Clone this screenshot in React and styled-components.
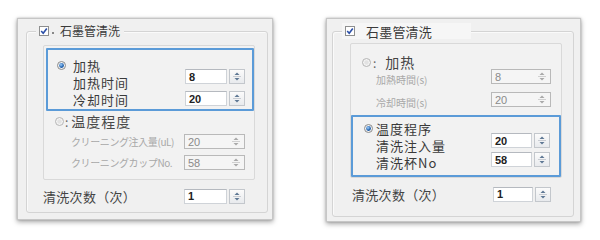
import styled, { createGlobalStyle, css } from "styled-components";

const GlobalStyle = createGlobalStyle`
  html, body {
    margin: 0;
    padding: 0;
    background: #ffffff;
  }
  body {
    width: 600px;
    height: 240px;
    overflow: hidden;
    font-family: "Noto Sans CJK SC", "Noto Sans", sans-serif;
    color: #333;
  }
`;

const Page = styled.div`
  display: flex;
  align-items: flex-start;
  padding: 18px 0 0 17px;
  gap: 53px;
`;

const Window = styled.div`
  box-sizing: border-box;
  width: ${(p) => p.$w}px;
  height: ${(p) => p.$h}px;
  padding: ${(p) => p.$pad};
  background: #f0f0f0;
  border: 1px solid #c6c6c6;
  box-shadow: 0 2px 5px rgba(0, 0, 0, 0.35), 0 0 2px rgba(0, 0, 0, 0.2);
`;

const Group = styled.fieldset`
  box-sizing: border-box;
  height: 100%;
  margin: 0;
  padding: 0;
  min-width: 0;
  display: flex;
  flex-direction: column;
  border: 1px solid #d4d4d4;
  border-radius: 3px;
  box-shadow: inset 1px 1px 0 #fafafa;
`;

const Legend = styled.legend`
  display: flex;
  align-items: center;
  box-sizing: border-box;
  height: ${(p) => p.$h}px;
  width: ${(p) => (p.$w ? `${p.$w}px` : "auto")};
  margin-left: 9px;
  padding: 0 4px 0 3px;
  gap: ${(p) => p.$gap}px;
  background: ${(p) => p.$bg || "#f0f0f0"};
`;

const Title = styled.span`
  font-size: ${(p) => p.$size}px;
  line-height: 1;
  color: #3a3a3a;
  letter-spacing: ${(p) => p.$ls || 0}px;
`;

const FocusDot = styled.span`
  width: 2px;
  height: 2px;
  background: #888;
  margin: 4px 2px 0 -1px;
`;

const Inner = styled.div`
  display: flex;
  flex-direction: column;
  margin: ${(p) => p.$m};
  background: #f2f2f2;
  border: 1px solid #d9d9d9;
  border-radius: 2px;
`;

const Highlight = styled.div`
  display: flex;
  margin: ${(p) => p.$m || 0};
  padding: ${(p) => p.$pad};
  border: 2px solid #5b9bd8;
  border-radius: 1px;
`;

const Plain = styled.div`
  display: flex;
  flex-direction: column;
  padding: ${(p) => p.$pad};
  gap: ${(p) => p.$gap || 0}px;
`;

const LabelCol = styled.div`
  display: flex;
  flex-direction: column;
  flex: 1;
`;

const InputCol = styled.div`
  display: flex;
  flex-direction: column;
  margin-top: ${(p) => p.$top}px;
  gap: ${(p) => p.$gap}px;
`;

const Head = styled.div`
  display: flex;
  align-items: center;
  height: ${(p) => p.$h}px;
  gap: ${(p) => p.$gap}px;
  font-size: ${(p) => p.$size}px;
  letter-spacing: 1px;
  color: ${(p) => p.$color || "#3a3a3a"};
  white-space: nowrap;
`;

const Colon = styled.span`
  font-size: 12px;
  color: #666;
  margin-right: ${(p) => p.$mr}px;
`;

const Label = styled.div`
  height: ${(p) => p.$h}px;
  line-height: ${(p) => p.$h}px;
  padding-left: ${(p) => p.$indent}px;
  font-size: ${(p) => p.$size}px;
  letter-spacing: 1px;
  color: #3a3a3a;
  white-space: nowrap;
`;

const Row = styled.div`
  display: flex;
  align-items: ${(p) => p.$align || "center"};
  justify-content: space-between;
  height: ${(p) => p.$h}px;
  margin-top: ${(p) => p.$mt || 0}px;
`;

const GrayLabel = styled.div`
  padding-left: ${(p) => p.$indent}px;
  padding-top: ${(p) => p.$drop || 0}px;
  font-family: "Noto Sans CJK JP", "Noto Sans", sans-serif;
  font-size: ${(p) => p.$size || 10}px;
  letter-spacing: ${(p) => p.$ls || 0}px;
  line-height: 14px;
  color: #a8a8a8;
  white-space: nowrap;
`;

const CountRow = styled.div`
  display: flex;
  align-items: center;
  justify-content: space-between;
  height: 16px;
  margin: ${(p) => p.$m};
`;

const CountLabel = styled.span`
  font-size: 13px;
  color: #444;
  letter-spacing: 0.3px;
`;

const SpinWrap = styled.div`
  display: flex;
  box-sizing: border-box;
  width: ${(p) => p.$w}px;
  height: 15px;
  gap: 2px;
  ${(p) =>
    p.$off &&
    css`
      gap: 0;
      border: 1px solid #b9b9b9;
      background: #f5f5f5;
      padding: 0 1px 0 0;
    `}
`;

const Field = styled.div`
  flex: 1;
  display: flex;
  align-items: center;
  box-sizing: border-box;
  padding-left: 3px;
  font-family: "Liberation Sans", Arial, sans-serif;
  font-size: 11px;
  ${(p) =>
    p.$off
      ? css`
          color: #8a8a8a;
        `
      : css`
          font-weight: bold;
          color: #222;
          background: #fff;
          border: 1px solid #cfd3d8;
          border-top-color: #b5b9bf;
        `}
`;

const SpinBtn = styled.div`
  display: flex;
  align-items: center;
  justify-content: center;
  box-sizing: border-box;
  width: ${(p) => (p.$off ? 14 : 16)}px;
  ${(p) =>
    !p.$off &&
    css`
      border: 1px solid #c3c7cc;
      background: linear-gradient(#fbfbfb, #e8eaed);
    `}
`;

function Arrows({ off }) {
  const c = off ? "#a9a9a9" : "#5f7894";
  return (
    <svg width="12" height="13" viewBox="0 0 12 13">
      <path d="M3.5 5 L6 2.5 L8.5 5 Z" fill={c} />
      <line x1="2" y1="6.5" x2="10" y2="6.5" stroke={off ? "#d0d0d0" : "#c8ccd2"} />
      <path d="M3.5 8 L6 10.5 L8.5 8 Z" fill={c} />
    </svg>
  );
}

function SpinBox({ value, w, off }) {
  return (
    <SpinWrap $w={w} $off={off}>
      <Field $off={off}>{value}</Field>
      <SpinBtn $off={off}>
        <Arrows off={off} />
      </SpinBtn>
    </SpinWrap>
  );
}

function Radio({ checked }) {
  return (
    <svg width="9" height="9" viewBox="0 0 9 9">
      <defs>
        <radialGradient id="rg" cx="40%" cy="35%" r="60%">
          <stop offset="0%" stopColor="#9fd0ff" />
          <stop offset="100%" stopColor="#0d4f9e" />
        </radialGradient>
      </defs>
      <circle cx="4.5" cy="4.5" r="4" fill="#f4f4f4" stroke={checked ? "#8a8a8a" : "#b4b4b4"} />
      {checked ? (
        <circle cx="4.5" cy="4.5" r="2.4" fill="url(#rg)" />
      ) : (
        <circle cx="4.5" cy="4.5" r="2.2" fill="#e2e2e2" />
      )}
    </svg>
  );
}

function Check() {
  return (
    <svg width="10" height="10" viewBox="0 0 10 10">
      <rect x="0.5" y="0.5" width="9" height="9" fill="#fff" stroke="#8e8f8f" />
      <path d="M2.2 5 L4.2 7.2 L7.8 2.4" fill="none" stroke="#2b4fa8" strokeWidth="1.6" />
    </svg>
  );
}

function LeftPanel() {
  return (
    <Window $w={256} $h={202} $pad="5px 4px 6px 8px">
      <Group>
        <Legend $h={14} $gap={4}>
          <Check />
          <FocusDot />
          <Title $size={12}>石墨管清洗</Title>
        </Legend>
        <Inner $m="7px 12px 0 16px">
          <Highlight $m="2px 0 0 2px" $pad="7px 7px 1px 9px">
            <LabelCol>
              <Head $h={17} $gap={7} $size={13}>
                <Radio checked />
                加热
              </Head>
              <Label $h={17} $indent={16} $size={13}>加热时间</Label>
              <Label $h={17} $indent={16} $size={13}>冷却时间</Label>
            </LabelCol>
            <InputCol $top={12} $gap={7}>
              <SpinBox value="8" w={60} />
              <SpinBox value="20" w={60} />
            </InputCol>
          </Highlight>
          <Plain $pad="2px 9px 8px 11px" $gap={4}>
            <Head $h={16} $gap={1} $size={14} $color="#4a4a4a">
              <Radio />
              <Colon $mr={1}>:</Colon>
              温度程度
            </Head>
            <Row $h={17}>
              <GrayLabel $indent={16} $size={10} $ls={-0.4}>クリーニング注入量(uL)</GrayLabel>
              <SpinBox value="20" w={61} off />
            </Row>
            <Row $h={17}>
              <GrayLabel $indent={16} $size={10} $ls={-0.4}>クリーニングカップNo.</GrayLabel>
              <SpinBox value="58" w={61} off />
            </Row>
          </Plain>
        </Inner>
        <CountRow $m="8px 22px 0 16px">
          <CountLabel>清洗次数（次）</CountLabel>
          <SpinBox value="1" w={61} />
        </CountRow>
      </Group>
    </Window>
  );
}

function RightPanel() {
  return (
    <Window $w={255} $h={204} $pad="4px 6px 4px 5px">
      <Group>
        <Legend $h={16} $gap={11} $w={129} $bg="#f6f6f6">
          <Check />
          <Title $size={13} $ls={0.2}>石墨管清洗</Title>
        </Legend>
        <Inner $m="4px 11px 0 17px">
          <Plain $pad="11px 10px 5px 11px">
            <Head $h={14} $gap={2} $size={14} $color="#444">
              <Radio />
              <Colon $mr={6}>:</Colon>
              加热
            </Head>
            <Row $h={18} $align="flex-start">
              <GrayLabel $indent={14} $drop={4}>加熱時間(s)</GrayLabel>
              <SpinBox value="8" w={60} off />
            </Row>
            <Row $h={18} $align="flex-start" $mt={5}>
              <GrayLabel $indent={14} $drop={4}>冷却時間(s)</GrayLabel>
              <SpinBox value="20" w={60} off />
            </Row>
          </Plain>
          <Highlight $pad="3px 9px 4px 11px">
            <LabelCol>
              <Head $h={17} $gap={3} $size={13}>
                <Radio checked />
                温度程序
              </Head>
              <Label $h={17} $indent={12} $size={13}>清洗注入量</Label>
              <Label $h={17} $indent={12} $size={13}>清洗杯No</Label>
            </LabelCol>
            <InputCol $top={13} $gap={4}>
              <SpinBox value="20" w={59} />
              <SpinBox value="58" w={59} />
            </InputCol>
          </Highlight>
        </Inner>
        <CountRow $m="8px 22px 0 19px">
          <CountLabel>清洗次数（次）</CountLabel>
          <SpinBox value="1" w={58} />
        </CountRow>
      </Group>
    </Window>
  );
}

export default function App() {
  return (
    <>
      <GlobalStyle />
      <Page>
        <LeftPanel />
        <RightPanel />
      </Page>
    </>
  );
}
